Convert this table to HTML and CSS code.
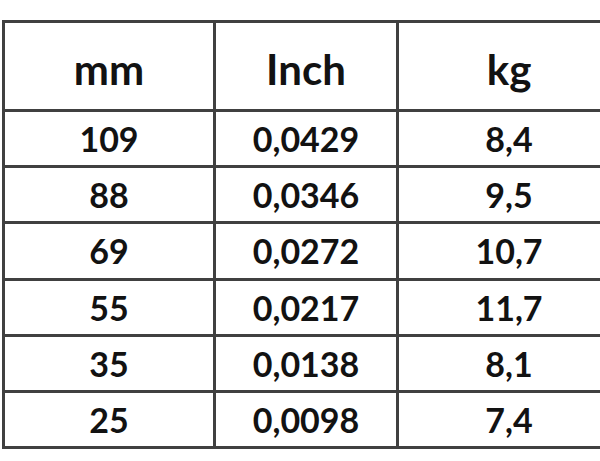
FILE: index.html
```html
<!DOCTYPE html>
<html lang="de">
<head>
    <meta charset="UTF-8">
    <meta name="viewport" content="width=device-width, initial-scale=1.0">
    <title>Tabelle</title>
    <link rel="stylesheet" href="styles.css">
</head>
<body>
    <table class="specs">
        <colgroup>
            <col class="c-mm">
            <col class="c-inch">
            <col class="c-kg">
        </colgroup>
        <thead>
            <tr>
                <th>mm</th>
                <th>Inch</th>
                <th>kg</th>
            </tr>
        </thead>
        <tbody>
            <tr><td>109</td><td>0,0429</td><td>8,4</td></tr>
            <tr><td>88</td><td>0,0346</td><td>9,5</td></tr>
            <tr><td>69</td><td>0,0272</td><td>10,7</td></tr>
            <tr><td>55</td><td>0,0217</td><td>11,7</td></tr>
            <tr><td>35</td><td>0,0138</td><td>8,1</td></tr>
            <tr><td>25</td><td>0,0098</td><td>7,4</td></tr>
        </tbody>
    </table>
</body>
</html>
```

FILE: styles.css
```css
html, body {
    margin: 0;
    overflow: hidden;
    background-color: #fff;
}
.specs {
    margin: 20px 0 0 2px;
    border-collapse: collapse;
    table-layout: fixed;
    width: 617px;
    font-family: Lato, "Open Sans", sans-serif;
    font-weight: 700;
    color: #121212;
}
.c-mm   { width: 211px; }
.c-inch { width: 183px; }
.c-kg   { width: 223px; }

.specs th,
.specs td {
    border: 3px solid #404040;
    text-align: center;
    padding: 0;
}
.specs th {
    height: 89px;
    font-size: 42px;
    padding-top: 6px;
    box-sizing: border-box;
}
.specs td {
    height: 53.2px;
    font-size: 34px;
}
```
